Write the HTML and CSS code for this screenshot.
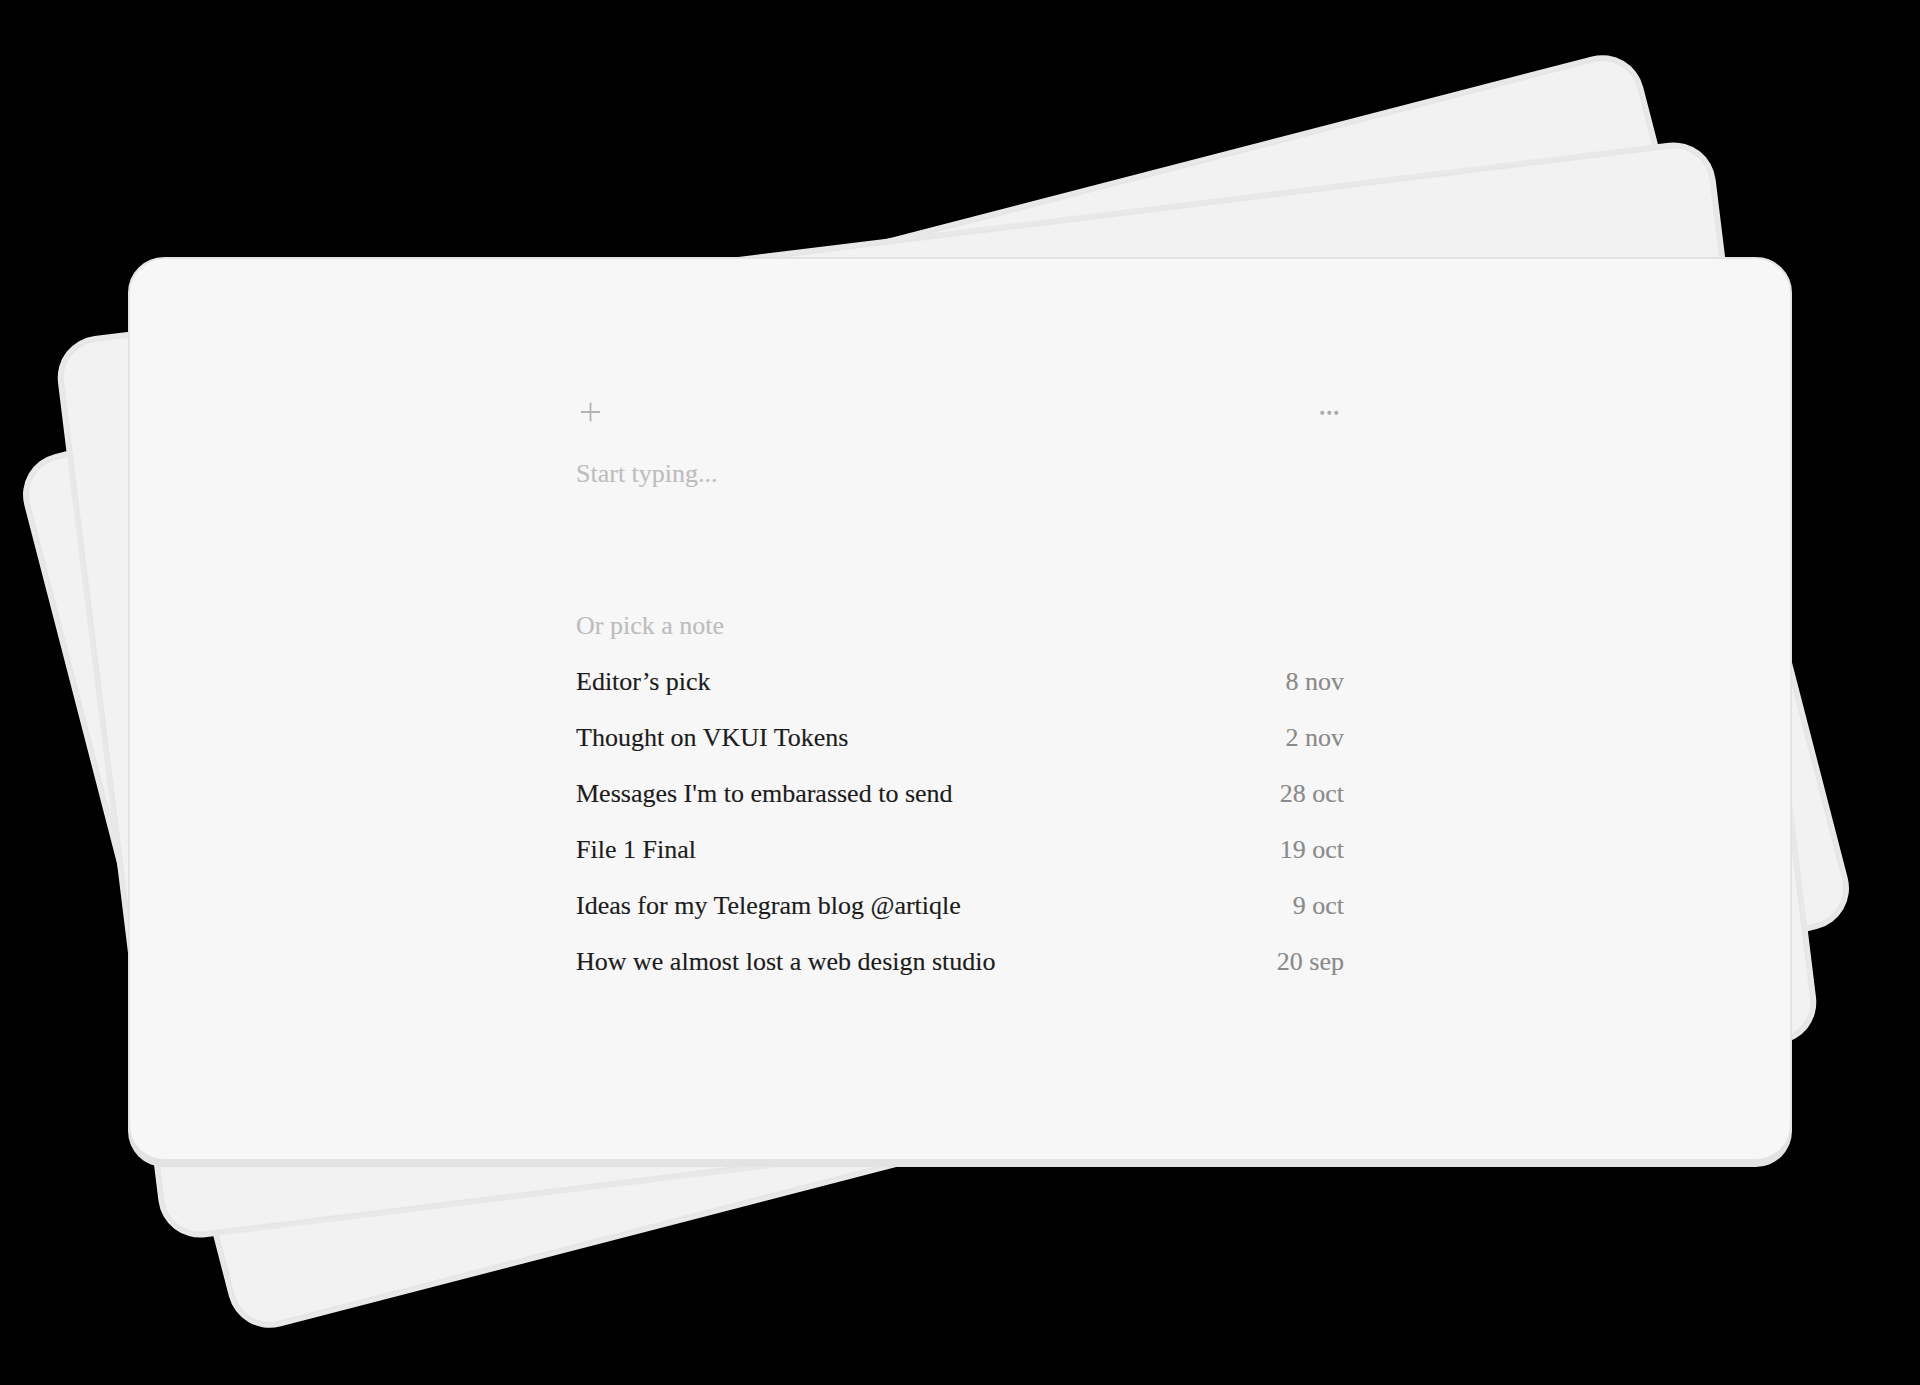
FILE: index.html
```html
<!DOCTYPE html>
<html lang="en">
<head>
<meta charset="utf-8">
<title>Notes</title>
<link rel="stylesheet" href="styles.css">
</head>
<body>
<div class="stage">
  <div class="sheet sheet-a"></div>
  <div class="sheet sheet-b"></div>
  <main class="card">
    <div class="column">
      <div class="toolbar">
        <svg class="icon-plus" width="26" height="20" viewBox="0 0 26 20" aria-hidden="true">
          <path d="M5 10H24M14.5 0.5V19.5" stroke="#b4b4b4" stroke-width="1.8" fill="none"/>
        </svg>
        <svg class="icon-more" width="24" height="20" viewBox="0 0 24 20" aria-hidden="true">
          <circle cx="2.3" cy="10.8" r="2.1" fill="#ababab"/>
          <circle cx="9.3" cy="10.8" r="2.1" fill="#ababab"/>
          <circle cx="16.3" cy="10.8" r="2.1" fill="#ababab"/>
        </svg>
      </div>
      <div class="placeholder">Start typing...</div>
      <section class="notes">
        <div class="notes-label">Or pick a note</div>
        <ul class="note-list">
          <li class="note"><span class="note-title">Editor’s pick</span><span class="note-date">8 nov</span></li>
          <li class="note"><span class="note-title">Thought on VKUI Tokens</span><span class="note-date">2 nov</span></li>
          <li class="note"><span class="note-title">Messages I'm to embarassed to send</span><span class="note-date">28 oct</span></li>
          <li class="note"><span class="note-title">File 1 Final</span><span class="note-date">19 oct</span></li>
          <li class="note"><span class="note-title">Ideas for my Telegram blog @artiqle</span><span class="note-date">9 oct</span></li>
          <li class="note"><span class="note-title">How we almost lost a web design studio</span><span class="note-date">20 sep</span></li>
        </ul>
      </section>
    </div>
  </main>
</div>
</body>
</html>
```
FILE: styles.css
```css
html, body {
  margin: 0;
  padding: 0;
  background: #000;
}

body {
  width: 1920px;
  height: 1385px;
  overflow: hidden;
  font-family: "Liberation Serif", "Times New Roman", serif;
}

.stage {
  position: relative;
  width: 1920px;
  height: 1385px;
  box-sizing: border-box;
  padding-top: 257px;
}

.sheet {
  position: absolute;
  box-sizing: border-box;
  background: #f2f2f2;
  border: 2px solid #e6e6e6;
  border-radius: 38px;
  box-shadow: 0 0 0 4px #e8e8e8;
}

.sheet-a {
  left: 104px;
  top: 245px;
  width: 1664px;
  height: 893px;
  transform: rotate(-14.5deg);
}

.sheet-b {
  left: 106px;
  top: 240px;
  width: 1662px;
  height: 900px;
  transform: rotate(-7deg);
}

.card {
  position: relative;
  box-sizing: border-box;
  margin-left: 128px;
  width: 1664px;
  height: 904px;
  padding-top: 143px;
  background: #f7f7f7;
  border: 2px solid #e3e3e3;
  border-radius: 36px;
  box-shadow: 0 6px 0 #e3e3e3;
}

.column {
  width: 768px;
  margin: 0 auto;
  font-size: 26px;
  line-height: 56px;
  -webkit-text-stroke: 0.15px currentColor;
}

.toolbar {
  display: flex;
  justify-content: space-between;
  align-items: center;
  height: 20px;
}

.toolbar svg {
  display: block;
}

.placeholder {
  margin-top: 24px;
  color: #bdbdbd;
}

.notes {
  margin-top: 96px;
}

.notes-label {
  color: #bdbdbd;
}

.note-list {
  list-style: none;
  margin: 0;
  padding: 0;
}

.note {
  display: flex;
  justify-content: space-between;
}

.note-title {
  color: #1c1c1c;
}

.note-date {
  color: #8a8a8a;
}
```
